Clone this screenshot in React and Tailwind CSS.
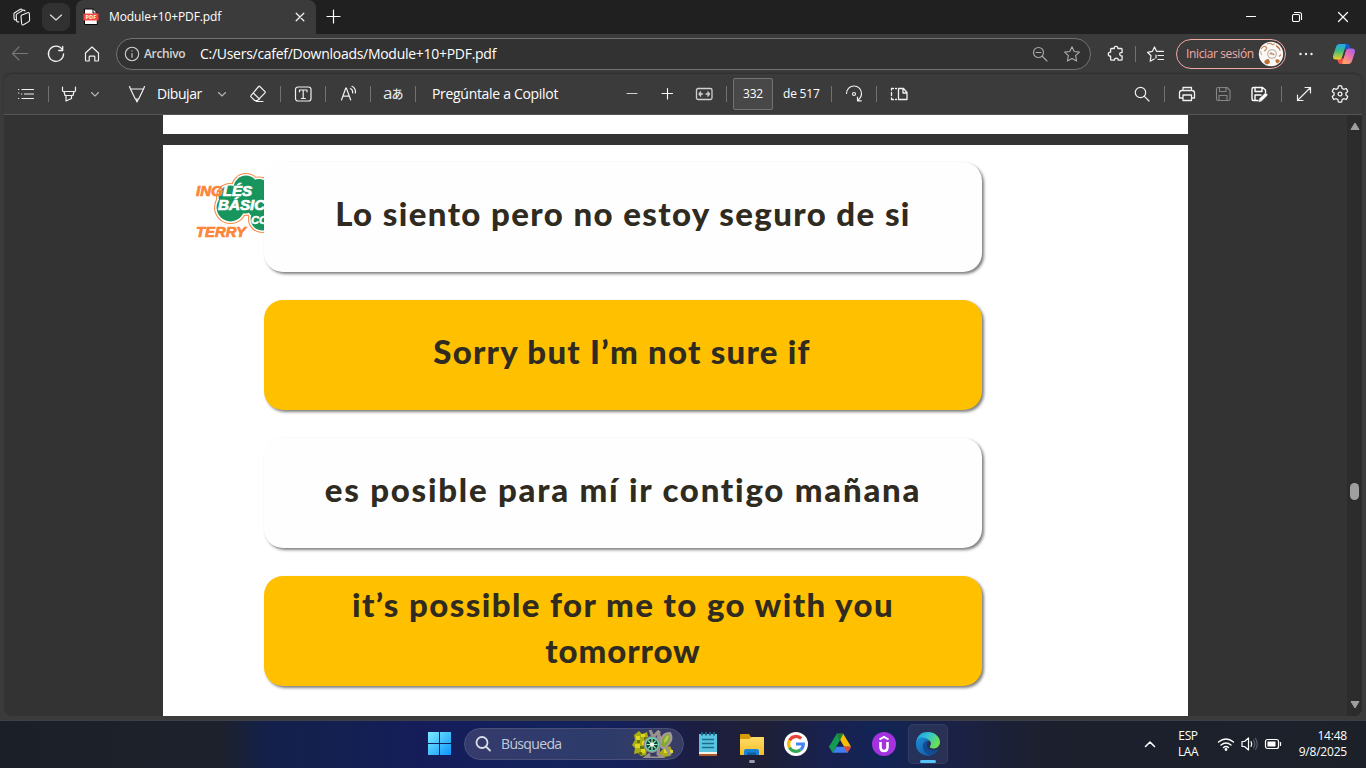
import React from "react";

function Icon({ className = "", size = 20, children, sw = 1.1, color = "#f0f0f0" }) {
  return (
    <svg
      className={"block shrink-0 " + className}
      width={size}
      height={size}
      viewBox={`0 0 ${size} ${size}`}
      fill="none"
      stroke={color}
      strokeWidth={sw}
      strokeLinecap="round"
      strokeLinejoin="round"
    >
      {children}
    </svg>
  );
}

function Divider({ className = "" }) {
  return <div className={"h-4 w-px shrink-0 bg-[#727272] " + className} />;
}

function Chevron({ className }) {
  return (
    <Icon className={className} size={10} color="#b5b5b5">
      <path d="M1.500 3.500 5 7l3.500-3.500" />
    </Icon>
  );
}

function TabStrip() {
  return (
    <div className="flex h-[34px] shrink-0 items-center bg-[#202020]">
      <Icon className="ml-3">
        <path d="M9.300 8.300 15.500 5.700q1.700-.5 1.900.9l.2 6.500q0 1-.8 1.500l-5.300 3.200q-1.600.6-1.800-.9L9 9.600q0-1 .3-1.300z" />
        <path d="M6.800 14.800q-2 .6-2.200-1L4.200 8.400q0-1 .8-1.500L11 3.300q1.300-.6 2 .6M3.900 12.900Q2.200 13 2.100 11.900L1.900 7q0-.8.8-1.300L8.300 2.300q1-.5 1.700.4" />
      </Icon>
      <div className="ml-[10px] flex h-7 w-7 items-center justify-center rounded-lg bg-[#313131]">
        <Icon size={14} color="#d8d8d8" sw={1.3}>
          <path d="m1.500 5 5.500 5 5.500-5" />
        </Icon>
      </div>
      <div className="ml-[6px] flex h-[34px] w-[240px] items-center rounded-t-lg bg-[#3b3b3b]">
        <svg className="ml-[7px] block" width="16" height="18" viewBox="0 0 16 18">
          <path d="M1.500 1h9l3.800 4v11.500H1.500z" fill="#fff" stroke="#080808" />
          <path d="M10 1v4h4" fill="none" stroke="#080808" />
          <path d="M.5 5.500h15v7H.5z" fill="#f8443f" />
          <text x="8" y="11" textAnchor="middle" fontSize="5.500" fontWeight="700" letterSpacing=".2" fill="#fff" fontFamily="Open Sans, sans-serif">PDF</text>
        </svg>
        <span className="ml-[10px] w-[180px] text-[12px] leading-4 tracking-[-0.1px] whitespace-nowrap text-white">Module+10+PDF.pdf</span>
        <Icon size={12} className="ml-[5px]" sw={1.3}>
          <path d="m2.200 2.200 7.600 7.600m0-7.600-7.600 7.600" />
        </Icon>
      </div>
      <Icon size={16} className="ml-[9px] -mt-[3px]" color="#fff" sw={1.2}>
        <path d="M8.500 2v13M2 8.500h13" />
      </Icon>
      <div className="ml-auto flex items-center pr-4">
        <Icon size={14} color="#fff"><path d="M2.500 6.500h9" /></Icon>
        <Icon size={14} className="ml-8" color="#fff">
          <rect x="2.500" y="4.500" width="7" height="7" rx="1.200" />
          <path d="M4.500 2.500h5q2 0 2 2v5" />
        </Icon>
        <Icon size={14} className="ml-8" color="#fff" sw={1.2}>
          <path d="m2.500 2.500 9 9m0-9-9 9" />
        </Icon>
      </div>
    </div>
  );
}

function Avatar() {
  return (
    <svg className="block shrink-0" width="26" height="26" viewBox="0 0 26 26">
      <circle cx="13" cy="13" r="12.200" fill="#fbf8f5" />
      <g fill="none" stroke="#c48a60" strokeWidth="1.100">
        <circle cx="14" cy="13" r="4.300" stroke="#b3aaa3" />
        <path d="M11.500 13h5M12.500 11.500l3.500 2.500" />
        <path d="M3 8q3-4 5-2t-2 4M9 3q3-1.500 4.500 0t3-.500M19.500 6q2.500 1 2.500 4M21 15.500l2-2" />
        <path d="M4 14q-2-2-1-4" stroke="#b8aea8" />
      </g>
      <path d="M6.500 20q3.500-3.500 5-.500t-2.500 4q-3.500-1-2.500-3.500zM17.500 18.500q3.500-1 4.500 1.500l-2.500 2.500q-2.500-1-2-4zM18.500 3.500l4 5-2-1-2.500-2z" fill="#b8713b" />
    </svg>
  );
}

function Copilot({ className }) {
  return (
    <svg className={"block shrink-0 " + className} width="24" height="24" viewBox="0 0 24 24">
      <defs>
        <linearGradient id="cpA" x1="0" y1="0" x2="0" y2="1">
          <stop stopColor="#20a7f2" /><stop offset=".45" stopColor="#3dbb80" /><stop offset="1" stopColor="#f5cd28" />
        </linearGradient>
        <linearGradient id="cpB" x1="1" y1="0" x2=".4" y2="1">
          <stop stopColor="#9a62ee" /><stop offset=".5" stopColor="#e66bb5" /><stop offset="1" stopColor="#ffa06a" />
        </linearGradient>
      </defs>
      <path d="M12 2h3.500q1.800 0 2.400 2l.9 3H15q-1.700 0-2.200 1.800z" fill="#1756cd" />
      <path d="M12 22H8.500q-1.800 0-2.400-2l-.9-3H9q1.700 0 2.200-1.800z" fill="#ea5548" />
      <path d="M7.500 2h5.500q1.200 0 .6 1.800L10.200 15q-.7 2.500-3 2.500H4Q0 17.500 1.300 13L4 5q1-3 3.500-3z" fill="url(#cpA)" />
      <path d="M16.500 22H11q-1.200 0-.6-1.800L13.800 9q.7-2.500 3-2.500H20q4 0 2.700 4.500L20 19q-1 3-3.500 3z" fill="url(#cpB)" />
      <path d="M12.500 8.500h1.200l-2.200 7h-1.200z" fill="#3b3b3b" />
    </svg>
  );
}

function AddressRow() {
  return (
    <div className="flex h-10 shrink-0 items-center bg-[#3b3b3b]">
      <Icon className="ml-[10px]" color="#777">
        <path d="M17.500 9.500h-15M9 3 2.500 9.500 9 16" />
      </Icon>
      <Icon className="ml-4" sw={1.3}>
        <path d="M16.300 5.500A7.600 7.600 0 1 0 17.600 10M16.700 2.500v4h-4" />
      </Icon>
      <Icon className="ml-4" sw={1.2}>
        <path d="M3.500 9 10 3l6.500 6v7.300q0 .7-.8.7h-2.900v-4q0-.8-.8-.8H8q-.8 0-.8.8v4H4.300q-.8 0-.8-.7z" />
      </Icon>
      <div className="ml-[14px] flex h-8 w-[975px] shrink-0 items-center rounded-full border border-[#727272] bg-[#323232]">
        <Icon size={16} className="ml-[7px]" color="#d0d0d0">
          <circle cx="8" cy="8" r="6.700" />
          <path d="M8 7.500v3.700M8 4.800v.3" />
        </Icon>
        <span className="ml-[4px] w-[56px] text-[12px] leading-4 font-semibold tracking-[-0.35px] text-[#d4d4d4]">Archivo</span>
        <span className="text-[14px] leading-5 tracking-[-0.28px] whitespace-nowrap text-white">C:/Users/cafef/Downloads/Module+10+PDF.pdf</span>
        <Icon size={18} className="ml-auto" color="#aaa">
          <circle cx="7.500" cy="7.500" r="5" /><path d="m11.500 11.500 4.500 4.500M5 7.500h5" />
        </Icon>
        <Icon size={18} className="mr-[9px] ml-[14px]" color="#aaa">
          <path d="m9 1.800 2.200 4.700 5.200.6-3.800 3.600 1 5.300L9 13.400 4.400 16l1-5.300-3.800-3.600 5.200-.6z" />
        </Icon>
      </div>
      <Icon className="ml-[15px]" sw={1.3}>
        <path d="M5.500 4.500h2.800Q8 2.300 10 2.300t1.900 2.200h3.300q.9 0 .9.900v3.100q-2.400-.2-2.400 1.600t2.400 1.700v3.500q0 .9-.9.900h-3q.1-2-1.900-2t-1.900 2H5.500q-.9 0-.9-.9v-3.100q-2.300 0-2.300-2t2.300-2V5.400q0-.9.900-.9z" />
      </Icon>
      <Divider className="ml-[9px] bg-[#5c5c5c]" />
      <Icon className="ml-[10px]" sw={1.2}>
        <path d="m8.200 15-4 2.200.8-5.500-3.500-3.400 4.800-.9L8.500 3l2 4.300h7M12 11.500h5.500M12 15.500h5.500M10 11v3" />
      </Icon>
      <div className="ml-[10px] flex h-[30px] w-[110px] shrink-0 items-center rounded-full border border-[#f0aaa6]">
        <span className="ml-[9px] w-[72px] shrink-0 text-[12px] leading-4 tracking-[-0.37px] whitespace-nowrap text-[#f1aaa7]">Iniciar sesión</span>
        <Avatar />
      </div>
      <Icon className="ml-[10px]" color="none">
        <g fill="#eee"><circle cx="4.500" cy="10" r="1.200" /><circle cx="10" cy="10" r="1.200" /><circle cx="15.500" cy="10" r="1.200" /></g>
      </Icon>
      <Copilot className="ml-4" />
    </div>
  );
}

function PdfToolbar() {
  return (
    <div className="mx-1 flex h-[41px] shrink-0 items-center rounded-t-lg border-b border-[#545454] bg-[#3b3b3b] shadow-[0_-1px_2px_#2d2d2d]">
      <Icon className="ml-3" sw={1.2}>
        <path d="M6 5.500h11.500M8.500 10h9M6 14.500h11.500M2.500 5.500h.3M2.500 9h.3M5.500 10h.3M2.500 14.500h.3" />
      </Icon>
      <Divider className="ml-3" />
      <Icon className="ml-[10px]" sw={1.2}>
        <path d="M3.500 3v3.500q0 1 1 1h11q1 0 1-1V3M5 7.500l1 4h8l1-4M7 11.500V17l5.500-2.500v-3" />
      </Icon>
      <Chevron className="ml-[11px]" />
      <Icon className="ml-[27px]" sw={1.2}>
        <path d="M2.500 2.500 3.500 5h13l1-2.500M3.500 5 8.300 15h3.400l4.800-10M8.700 15l1.300 3 1.300-3" />
      </Icon>
      <span className="ml-[10px] w-[60px] text-[14px] leading-5 tracking-[-0.45px] text-white">Dibujar</span>
      <Chevron />
      <Icon className="ml-[21px]" sw={1.2}>
        <path d="M11.800 2.500 17 7.700q.6.600 0 1.200l-7.500 7.600H6.700L3 12.800q-.6-.6 0-1.200L10.600 2.500q.6-.6 1.200 0zM5.300 9l6.200 6.200M8 17.500h7" />
      </Icon>
      <Divider className="ml-3" />
      <Icon className="ml-3" sw={1.2}>
        <rect x="2.500" y="3" width="15.500" height="14" rx="2.500" />
        <path d="M6.500 7.800V6h7.500v1.800M10.200 6v8.500M8.300 14.500h4" />
      </Icon>
      <Divider className="ml-3" />
      <Icon className="ml-[13px]" sw={1.2}>
        <path d="m2.500 16 4.300-12h.5l4.400 12M4 12.200h6M11.500 4.500q2.500 1.300 2.200 4.500M13 2.300q4 2 3.400 6.700" />
      </Icon>
      <Divider className="ml-[11px]" />
      <span className="ml-3 flex w-5 items-baseline font-['Open_Sans','Noto_Sans_CJK_JP',sans-serif] whitespace-nowrap text-[#e8e8e8]">
        <span className="text-[17px] leading-5">a</span><span className="-ml-[1px] text-[12px] leading-5 font-medium">あ</span>
      </span>
      <Divider className="ml-3" />
      <span className="ml-4 w-[190px] text-[14px] leading-5 tracking-[-0.31px] whitespace-nowrap text-white">Pregúntale a Copilot</span>
      <Icon color="#d0d0d0"><path d="M5 9.500h10" /></Icon>
      <Icon className="ml-[15px]" color="#fff"><path d="M5 9.500h10.500M10.500 4.500v10.500" /></Icon>
      <Icon className="ml-[17px]" color="#d0d0d0" sw={1.3}>
        <rect x="2.500" y="4.500" width="15.500" height="11" rx="1.500" />
        <path d="M5 10h3.500M6.700 8 5 10l1.700 2M12 10h3.500M13.800 8l1.700 2-1.700 2" />
      </Icon>
      <Divider className="ml-3" />
      <div className="ml-[6px] flex h-8 w-10 shrink-0 items-center justify-center rounded-[2px] border border-[#737373] bg-[#484848] text-[12px] tracking-[-0.2px] text-white">332</div>
      <span className="ml-[10px] w-[48px] text-[12px] leading-5 tracking-[-0.2px] whitespace-nowrap text-white">de 517</span>
      <Divider />
      <Icon className="ml-3" sw={1.2}>
        <path d="M2.500 9.500A7.500 7.500 0 0 1 17.500 9.500q0 4-3.800 7M13.500 13v3.800h3.800" />
        <circle cx="10" cy="10" r="1.500" />
      </Icon>
      <Divider className="ml-3" />
      <Icon className="ml-3" sw={1.3}>
        <path d="M9.500 4.500h5l3.500 4v7H9.500zM14 4.500V9h4M6.500 4.500h1M4.500 4.500h-2V6M2.500 8.500v3M2.500 14v1.500h2M6.500 15.500h1" />
      </Icon>
      <div className="ml-auto flex items-center pr-3">
        <Icon sw={1.2}><circle cx="8.500" cy="8.500" r="5.200" /><path d="m12.400 12.400 4.600 4.600" /></Icon>
        <Divider className="ml-3" />
        <Icon className="ml-3" sw={1.3}>
          <path d="M6 6.500v-3h8.500v3M5.500 14h-3V9q0-2.500 2.500-2.500h10q2.500 0 2.500 2.500v5h-2.800M6 11h8.500v5.500H6z" />
        </Icon>
        <Icon className="ml-4" color="#858585">
          <path d="M3.500 5q0-1.500 1.500-1.500h9L17 6.500V15q0 1.500-1.500 1.500H5q-1.500 0-1.500-1.500zM6.500 3.500v4h6.500v-4M6 16.500v-5h8v5" />
        </Icon>
        <Icon className="ml-4" sw={1.4} color="#fff">
          <path d="M9 16.500H4.500q-1.500 0-1.500-1.500V5q0-1.500 1.500-1.500h9L16.500 6v2.500M6 3.500v4h7v-4M6 16.500V11h6" />
          <path d="m10 17.500.8-3L16.500 9l2 2-5.600 5.600z" fill="#fff" strokeWidth=".6" />
        </Icon>
        <Divider className="ml-3" />
        <Icon className="ml-3" sw={1.2}>
          <path d="m3.500 16.500 13-13M11 3.500h5.500V9M3.500 11v5.500H9" />
        </Icon>
        <Icon className="ml-4" sw={1.3}>
          <path d="M8.400 2q1.600-.5 3.200 0l.5 2.400 1.600.9 2.400-.8q1.200 1.300 1.600 2.900l-1.800 1.600v2l1.800 1.600q-.4 1.600-1.600 2.900l-2.400-.8-1.600.9-.5 2.400q-1.600.5-3.200 0l-.5-2.400-1.600-.9-2.400.8q-1.200-1.300-1.600-2.900L4.100 11V9L2.300 7.400q.4-1.600 1.600-2.900l2.400.8 1.600-.9z" />
          <circle cx="10" cy="10" r="1.900" />
        </Icon>
      </div>
    </div>
  );
}

const lobes = [
  [51, 18, 15],
  [64, 21, 14.5],
  [35, 27, 14],
  [35.5, 37.5, 16.5],
  [50, 32, 14],
  [67, 49, 14],
  [62, 38, 12],
];

function Cloud({ inset, fill }) {
  return (
    <g fill={fill}>
      {lobes.map(([x, y, r]) => (
        <circle key={x} cx={x} cy={y} r={r - inset} />
      ))}
    </g>
  );
}

function CourseLogo() {
  return (
    <svg className="block w-[69px] shrink-0 overflow-hidden" width="69" height="72" viewBox="0 0 69 72" fontFamily="Liberation Sans, Arial, sans-serif" fontWeight="700" fontStyle="italic">
      <Cloud inset={0} fill="#f98a45" />
      <Cloud inset={1.1} fill="#fff" />
      <Cloud inset={2.6} fill="#18945d" />
      <text x="1" y="26" fontSize="14" fill="#fd8538" stroke="#fd8538" strokeWidth=".7" textLength="56" lengthAdjust="spacingAndGlyphs">ING<tspan fill="#fff" stroke="#fff">LÉS</tspan></text>
      <text x="23" y="40" fontSize="14" fill="#fff" stroke="#fff" strokeWidth=".7" textLength="59" lengthAdjust="spacingAndGlyphs">BÁSICO</text>
      <text x="56" y="54" fontSize="10" fill="#fff" stroke="#fff" strokeWidth=".5" textLength="25" lengthAdjust="spacingAndGlyphs">CON</text>
      <text x="1" y="67.300" fontSize="14" fill="#fd8538" stroke="#fd8538" strokeWidth=".7" textLength="50" lengthAdjust="spacingAndGlyphs">TERRY</text>
    </svg>
  );
}

function Card({ yellow, children }) {
  return (
    <div
      className={
        "flex h-[110px] w-[718px] flex-col items-center justify-center rounded-[19px] pb-[8px] text-center font-['Lato',sans-serif] text-[33px] leading-[46px] font-black whitespace-nowrap text-[#2f2b20] shadow-[2px_2px_3px_rgba(0,0,0,0.5)] " +
        (yellow ? "bg-[#ffc000]" : "bg-[#fefefe]")
      }
    >
      {children}
    </div>
  );
}

function Viewer() {
  return (
    <div className="mx-1 flex h-[601px] shrink-0 overflow-hidden rounded-b-lg bg-[#333]">
      <div className="ml-[159px] flex w-[1025px] flex-col">
        <div className="h-[19px] shrink-0 bg-white" />
        <div className="mt-[11px] flex grow bg-white pt-[16.500px] pl-8">
          <div className="pt-2"><CourseLogo /></div>
          <div className="flex flex-col gap-7">
            <Card><span className="tracking-[1.39px]">Lo siento pero no estoy seguro de si</span></Card>
            <Card yellow><span className="mr-[2px] tracking-[1.23px]">Sorry but I’m not sure if</span></Card>
            <Card><span className="tracking-[1.75px]">es posible para mí ir contigo mañana</span></Card>
            <Card yellow>
              <span className="tracking-[1.4px]">it’s possible for me to go with you</span>
              <span className="tracking-[0.9px]">tomorrow</span>
            </Card>
          </div>
        </div>
      </div>
      <div className="ml-auto flex w-[15px] flex-col items-center bg-[#2c2c2c]">
        <svg className="mt-[7px] block" width="10" height="9" viewBox="0 0 10 9"><path d="M5 1 9 7.500H1z" fill="#9f9f9f" stroke="#9f9f9f" strokeLinejoin="round" /></svg>
        <div className="mt-[352px] h-[17px] w-[9px] rounded-full bg-[#9f9f9f]" />
        <svg className="mt-auto mb-[7px] block" width="10" height="9" viewBox="0 0 10 9"><path d="M5 8 9 1.500H1z" fill="#9f9f9f" stroke="#9f9f9f" strokeLinejoin="round" /></svg>
      </div>
    </div>
  );
}

function SearchArt() {
  return (
    <svg className="block" width="42" height="28" viewBox="0 0 42 28">
      <path d="M2 5l5-4 3 3 5-2 2 9-3 14-5 1-3-3-4 1 1-6-3-3 3-5z" fill="#a9ae13" />
      <path d="M4 6h4v4H4zM9 4h4v3H9zM3 14h5v4H3zM9 19h4v4H9zM10 11h4v4h-4z" fill="#e0d51c" />
      <path d="M5 10h3v3H5zM8 16h4v3H8zM7 22h3v3H7zM12 7h4v3h-4z" fill="#647610" />
      <path d="M31 19l7-3 3 6-3 4-7 1-4-4z" fill="#a9ad18" /><path d="M32 19h4v4h-4zM38 20h3v3h-3z" fill="#e1d726" />
      <path d="M18 0l3 7 5-5 2 6-2 16 5 4H13l5-4M27 1l-1 13q5-4 12 11" fill="none" stroke="#9b918f" strokeWidth="3" />
      <path d="M28 15Q29 3 38 3q4 6-3 13-4 5-7-1z" fill="#86a53a" stroke="#a69a9b" strokeWidth="2" />
      <path d="M32 13Q32 6 37 5q0 5-5 8z" fill="#b6cc52" />
      <circle cx="20" cy="14.500" r="8.500" fill="#958b8c" /><circle cx="20" cy="14.500" r="6.500" fill="#173f3c" stroke="#63dbb4" strokeWidth="1.300" />
      <path d="M20 9v11M14.500 14.500h11M16.200 10.700l7.600 7.600M23.800 10.700l-7.600 7.600" stroke="#a8edbd" strokeWidth="1.200" />
      <circle cx="20" cy="14.500" r="2" fill="#f2fff0" />
    </svg>
  );
}

function Taskbar() {
  return (
    <div className="flex h-12 shrink-0 items-center border-t border-[#3d404b] bg-[linear-gradient(90deg,#1b2028_0px,#1c212b_220px,#14204a_265px,#132051_340px,#151d5a_430px,#13235c_560px,#15205a_630px,#1b1e43_690px,#1f2036_760px,#182150_830px,#122455_880px,#1b2144_960px,#1c202e_1040px,#1c2129_1366px)] pb-[2px]">
      <svg className="ml-[428px] block" width="23" height="23" viewBox="0 0 23 23">
        <defs><linearGradient id="win" x1="0" y1="0" x2="1" y2="1"><stop stopColor="#7cebff" /><stop offset="1" stopColor="#0c94fa" /></linearGradient></defs>
        <path d="M0 0h11v11H0zM12 0h11v11H12zM0 12h11v11H0zM12 12h11v11H12z" fill="url(#win)" />
      </svg>
      <div className="ml-[13px] flex h-8 w-[220px] items-center rounded-full border border-[#4a5079] bg-[linear-gradient(90deg,#353b6c,#2c3b6b_60%,#383d63)]">
        <Icon size={18} className="ml-[9px]" color="#dadde8" sw={1.8}>
          <circle cx="8" cy="7.500" r="5.500" /><path d="m12 11.500 4 4" />
        </Icon>
        <span className="ml-[9px] w-[131px] text-[14px] leading-5 tracking-[-0.65px] text-[#c5c9d7]">Búsqueda</span>
        <SearchArt />
      </div>
      <svg className="ml-[14px] block" width="20" height="26" viewBox="0 0 20 26">
        <path d="M1 3h18v20H1z" fill="#59c4df" /><path d="M1 21h18v2H1z" fill="#f4f1e8" /><path d="M1 23h18v2H1z" fill="#a8582a" />
        <path d="M4 1v3.500M8 1v3.500M12 1v3.500M16 1v3.500" stroke="#17658a" strokeWidth="1.800" /><path d="M4 8.500h12M4 12.500h12M4 16.500h12" stroke="#176e91" strokeWidth="1.500" />
      </svg>
      <div className="ml-[21px] flex h-12 w-[26px] flex-col items-center pt-[13px]">
        <svg className="block shrink-0" width="26" height="24" viewBox="0 0 26 24">
          <defs><linearGradient id="fold" x2="0" y2="1"><stop stopColor="#ffdc67" /><stop offset="1" stopColor="#f8bd28" /></linearGradient></defs>
          <path d="M1 2q0-1 1-1h8l2 3h12q1 0 1 1v17H1z" fill="#d99a09" /><path d="M1 6h9l3-2h11q1 0 1 1v17H1z" fill="url(#fold)" />
          <path d="M5 22v-4q0-2 2-2h11q2 0 2 2v4z" fill="#1683d3" /><path d="M8 19.500h9V22H8z" fill="#125f9f" />
        </svg>
        <div className="mt-[3px] h-[3px] w-[6px] shrink-0 rounded-full bg-[#9a9dab]" />
      </div>
      <svg className="ml-[19px] block" width="24" height="24" viewBox="0 0 24 24">
        <circle cx="12" cy="12" r="12" fill="#fff" />
        <g fill="none" strokeWidth="3.200"><path d="M17.200 6.500A7.400 7.400 0 0 0 5.500 8.500" stroke="#ea4335" /><path d="M5.500 8.500a7.400 7.400 0 0 0 0 7" stroke="#fbbc04" /><path d="M5.500 15.500a7.400 7.400 0 0 0 11 2.300" stroke="#34a853" /><path d="M16.500 17.800Q19.300 15.500 19.300 12H12" stroke="#4285f4" /></g>
      </svg>
      <svg className="ml-5 block" width="24" height="22" viewBox="-1 0 26 22">
        <path d="M8.500 0h7L24 14h-7.500z" fill="#fbbc04" /><path d="M8.500 0 0 14l4 6.500L12 7z" fill="#159b50" /><path d="M4 20.500h16l4-6.500H8z" fill="#3f7ff1" /><path d="m20 20.500 4-6.500h-8z" fill="#ea4335" /><path d="M8.500 0h7L12 7z" fill="#188038" />
      </svg>
      <svg className="ml-5 block" width="24" height="24" viewBox="0 0 24 24">
        <circle cx="12" cy="12" r="12" fill="#a332df" /><path d="m7.500 7.500 4.500-2.700 4.500 2.700" fill="none" stroke="#fff" strokeWidth="2" /><path d="M8.500 10v5q0 4 3.500 4t3.500-4v-5" fill="none" stroke="#fff" strokeWidth="2.600" />
      </svg>
      <div className="ml-3 flex h-10 w-10 flex-col items-center rounded-[5px] border border-white/[0.06] bg-white/[0.07] pt-[7px]">
        <svg className="block shrink-0" width="24" height="24" viewBox="0 0 24 24">
          <defs>
            <linearGradient id="ed" x1="0" y1="0" x2="1" y2=".4"><stop stopColor="#229bdc" /><stop offset=".5" stopColor="#2fc2d8" /><stop offset="1" stopColor="#6ae057" /></linearGradient>
            <linearGradient id="ed2" x1="0" y1="0" x2="1" y2="1"><stop stopColor="#1c8ed7" /><stop offset="1" stopColor="#1557a7" /></linearGradient>
          </defs>
          <path d="M0 11C1 3 6 0 12 0c7 0 12 5 12 10 0 4-3 6.500-6.500 6.500-3 0-4-1-3.500-2q3-5-3-7.500C5 5 1 8 0 11z" fill="url(#ed)" />
          <path d="M0 12C0 7 5 4 10 6.500q2 1 3 2.500-5 1-5 6c0 4 3 8 7 8.700Q12 24.500 8 23 0 20 0 12z" fill="url(#ed2)" />
          <path d="M10 9q-4 2-3 7 2 7 8 7.500 5-1.500 7.500-5.500.3-.7-.5-.6-8 2.600-11-2.400-1-2.500 1-5.500.5-1-2-.5z" fill="#124c91" />
        </svg>
        <div className="mt-1 h-[3px] w-4 shrink-0 rounded-full bg-[#54c2fb]" />
      </div>
      <div className="ml-auto flex items-center pr-[19px] text-[12px] text-white">
        <Icon size={12} sw={1.5} color="#fff"><path d="m1.500 8.500 4.500-4.500 4.500 4.500" /></Icon>
        <div className="ml-[18px] w-[28px] text-center leading-4 tracking-[-0.4px]"><div>ESP</div><div>LAA</div></div>
        <Icon size={18} className="ml-[15px]" color="#fff" sw={1.4}>
          <path d="M1.500 7q7.500-6 15 0M4 10q5-4 10 0M6.500 12.500q2.500-2 5 0" /><circle cx="9" cy="14.500" r=".7" fill="#fff" />
        </Icon>
        <Icon size={18} className="ml-[5px]" color="#fff" sw={1.2}>
          <path d="M2 6.500h2.500L8.500 3v12l-4-3.500H2zM11 6.700q1.500 2.300 0 4.600" /><path d="M13.500 5q2.500 4 0 8M15.500 3.500q3.500 5.500 0 11" stroke="#5b616c" />
        </Icon>
        <Icon size={18} className="ml-[6px]" color="#fff" sw={1.2}>
          <rect x="1.500" y="4.500" width="13" height="9" rx="2" /><rect x="3.500" y="6.500" width="8" height="5" fill="#fff" stroke="none" /><path d="M16.500 7.500v3" />
        </Icon>
        <div className="ml-[12px] w-[53px] text-right leading-4 tracking-[-0.2px] whitespace-nowrap"><div>14:48</div><div>9/8/2025</div></div>
      </div>
    </div>
  );
}

export default function App() {
  return (
    <div className="flex h-[768px] w-[1366px] flex-col overflow-hidden bg-[#3b3b3b] font-['Open_Sans','Noto_Sans',sans-serif]">
      <TabStrip />
      <AddressRow />
      <PdfToolbar />
      <Viewer />
      <div className="h-1 shrink-0 bg-[#3b3b3b]" />
      <Taskbar />
    </div>
  );
}
